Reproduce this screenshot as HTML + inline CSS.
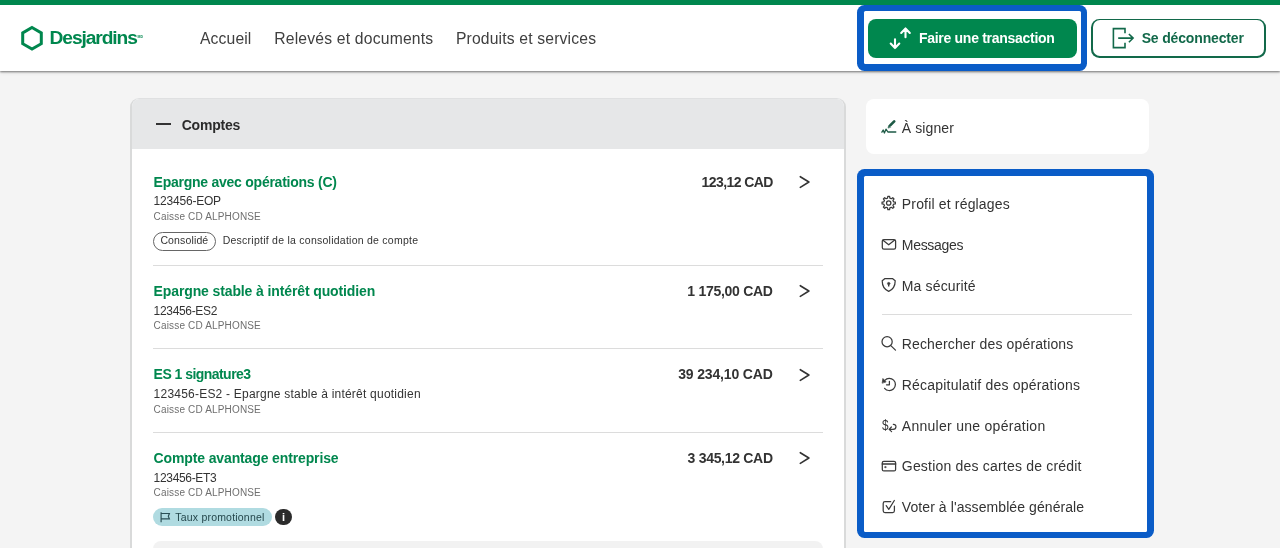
<!DOCTYPE html>
<html lang="fr"><head><meta charset="utf-8"><title>Desjardins</title>
<style>
html,body{margin:0;padding:0;}
body{width:1280px;height:548px;overflow:hidden;background:#f4f4f4;font-family:"Liberation Sans",sans-serif;position:relative;}
.t{position:absolute;white-space:nowrap;line-height:1;}
.abs{position:absolute;}
svg{position:absolute;overflow:visible;}
#w{position:absolute;left:0;top:0;width:1280px;height:548px;will-change:transform;}
</style></head><body><div id="w">

<div class="abs" style="left:0;top:0;width:1280px;height:70.5px;background:#fff;box-shadow:0 1px 2px rgba(0,0,0,.5),0 2px 4px rgba(0,0,0,.07);"></div>
<div class="abs" style="left:0;top:0;width:1280px;height:5px;background:#00874e;"></div>
<svg style="left:19px;top:24px" width="26" height="28" viewBox="19 24 26 28"><polygon points="32,27.5 41.3,32.9 41.3,43.7 32,49.1 22.7,43.7 22.7,32.9" fill="none" stroke="#00874e" stroke-width="3" stroke-linejoin="miter"/></svg>
<span class="t" style="top:28.35px;font-size:19.2px;color:#00874e;left:49.60px;letter-spacing:-1.100px;font-weight:bold;">Desjardins</span>
<span class="t" style="top:35.54px;font-size:3.5px;color:#00874e;left:137.50px;font-weight:bold;">MD</span>
<span class="t" style="top:31.01px;font-size:15.7px;color:#404040;left:200.00px;letter-spacing:0.130px;">Accueil</span>
<span class="t" style="top:31.01px;font-size:15.7px;color:#404040;left:274.20px;letter-spacing:0.200px;">Relevés et documents</span>
<span class="t" style="top:31.01px;font-size:15.7px;color:#404040;left:455.90px;letter-spacing:0.170px;">Produits et services</span>
<div class="abs" style="left:857.3px;top:5px;width:230.1px;height:65.5px;border-radius:7.5px;background:#0a5cc7;"></div>
<div class="abs" style="left:863.9px;top:11.4px;width:217.3px;height:52.9px;border-radius:1.5px;background:#fff;"></div>
<div class="abs" style="left:868.2px;top:18.6px;width:209px;height:39.3px;border-radius:8px;background:#00874e;"></div>
<svg style="left:885px;top:25px" width="28" height="28" viewBox="885 25 28 28" fill="none" stroke="#fff" stroke-width="2.1" stroke-linecap="round" stroke-linejoin="round"><path d="M895 39.2V48M890.7 43.6l4.3 4.5 4.3-4.5"/><path d="M905.5 37.3V28.6M901.2 33l4.3-4.5 4.3 4.5"/></svg>
<span class="t" style="top:31.25px;font-size:14px;color:#fff;left:919.00px;letter-spacing:-0.290px;font-weight:bold;">Faire une transaction</span>
<div class="abs" style="left:1091.2px;top:18.5px;width:174.8px;height:39.1px;border-radius:8.5px;background:#12694a;"></div>
<div class="abs" style="left:1092.8px;top:20.1px;width:171.6px;height:35.9px;border-radius:7px;background:#fff;"></div>
<svg style="left:1110px;top:26px" width="26" height="24" viewBox="1110 26 26 24" fill="none" stroke="#12694a" stroke-width="1.6" stroke-linecap="butt" stroke-linejoin="miter"><path d="M1125 33.200V28.600H1113.400V47.600H1125V42.800"/><path d="M1118.200 38.100H1133M1128.900 34l4.200 4.100-4.200 4.100"/></svg>
<span class="t" style="top:30.65px;font-size:14px;color:#12694a;left:1141.70px;letter-spacing:-0.160px;font-weight:bold;">Se déconnecter</span>
<div class="abs" style="left:130px;top:98px;width:716px;height:470px;border:2px solid #d9dada;border-top:1px solid #dfe0e1;border-radius:9px;background:#fff;overflow:hidden;box-sizing:border-box"><div style="height:50px;background:#e6e7e8"></div></div>
<div class="abs" style="left:155.6px;top:123.2px;width:15.8px;height:1.6px;background:#333"></div>
<span class="t" style="top:117.65px;font-size:14px;color:#2b2b2b;left:181.70px;letter-spacing:-0.200px;font-weight:bold;">Comptes</span>
<span class="t" style="top:174.65px;font-size:14px;color:#00874e;left:153.60px;letter-spacing:-0.250px;font-weight:bold;">Epargne avec opérations (C)</span>
<span class="t" style="top:195.34px;font-size:12px;color:#333;left:153.60px;letter-spacing:-0.210px;">123456-EOP</span>
<span class="t" style="top:212.03px;font-size:10px;color:#6f6f6f;left:153.60px;letter-spacing:0.160px;">Caisse CD ALPHONSE</span>
<span class="t" style="top:174.65px;font-size:14px;color:#333;right:507.30px;letter-spacing:-0.590px;font-weight:bold;">123,12 CAD</span>
<svg style="left:798px;top:174.0px" width="14" height="16" viewBox="0 0 14 16" fill="none" stroke="#333" stroke-width="1.6" stroke-linecap="round" stroke-linejoin="round"><path d="M2.300 2.700L10.900 8.050L2.300 13.400"/></svg>
<span class="t" style="top:283.95px;font-size:14px;color:#00874e;left:153.60px;letter-spacing:-0.120px;font-weight:bold;">Epargne stable à intérêt quotidien</span>
<span class="t" style="top:304.64px;font-size:12px;color:#333;left:153.60px;letter-spacing:-0.330px;">123456-ES2</span>
<span class="t" style="top:321.34px;font-size:10px;color:#6f6f6f;left:153.60px;letter-spacing:0.160px;">Caisse CD ALPHONSE</span>
<span class="t" style="top:283.95px;font-size:14px;color:#333;right:507.30px;letter-spacing:-0.280px;font-weight:bold;">1 175,00 CAD</span>
<svg style="left:798px;top:283.3px" width="14" height="16" viewBox="0 0 14 16" fill="none" stroke="#333" stroke-width="1.6" stroke-linecap="round" stroke-linejoin="round"><path d="M2.300 2.700L10.900 8.050L2.300 13.400"/></svg>
<span class="t" style="top:367.15px;font-size:14px;color:#00874e;left:153.60px;letter-spacing:-0.540px;font-weight:bold;">ES 1 signature3</span>
<span class="t" style="top:387.84px;font-size:12px;color:#333;left:153.60px;letter-spacing:0.220px;">123456-ES2 - Epargne stable à intérêt quotidien</span>
<span class="t" style="top:404.54px;font-size:10px;color:#6f6f6f;left:153.60px;letter-spacing:0.160px;">Caisse CD ALPHONSE</span>
<span class="t" style="top:367.15px;font-size:14px;color:#333;right:507.30px;letter-spacing:-0.150px;font-weight:bold;">39 234,10 CAD</span>
<svg style="left:798px;top:366.5px" width="14" height="16" viewBox="0 0 14 16" fill="none" stroke="#333" stroke-width="1.6" stroke-linecap="round" stroke-linejoin="round"><path d="M2.300 2.700L10.900 8.050L2.300 13.400"/></svg>
<span class="t" style="top:450.85px;font-size:14px;color:#00874e;left:153.60px;letter-spacing:-0.130px;font-weight:bold;">Compte avantage entreprise</span>
<span class="t" style="top:471.54px;font-size:12px;color:#333;left:153.60px;letter-spacing:-0.330px;">123456-ET3</span>
<span class="t" style="top:488.24px;font-size:10px;color:#6f6f6f;left:153.60px;letter-spacing:0.160px;">Caisse CD ALPHONSE</span>
<span class="t" style="top:450.85px;font-size:14px;color:#333;right:507.30px;letter-spacing:-0.300px;font-weight:bold;">3 345,12 CAD</span>
<svg style="left:798px;top:450.2px" width="14" height="16" viewBox="0 0 14 16" fill="none" stroke="#333" stroke-width="1.6" stroke-linecap="round" stroke-linejoin="round"><path d="M2.300 2.700L10.900 8.050L2.300 13.400"/></svg>
<div class="abs" style="left:153px;top:264.5px;width:670px;height:1px;background:#dcdcdc"></div>
<div class="abs" style="left:153px;top:348px;width:670px;height:1px;background:#dcdcdc"></div>
<div class="abs" style="left:153px;top:432px;width:670px;height:1px;background:#dcdcdc"></div>
<div class="abs" style="left:153px;top:232px;width:61px;height:16.8px;border:1px solid #666;border-radius:10px;"></div>
<span class="t" style="top:235.41px;font-size:10.5px;color:#333;left:160.40px;letter-spacing:0.140px;">Consolidé</span>
<span class="t" style="top:234.51px;font-size:10.5px;color:#333;left:222.70px;letter-spacing:0.250px;">Descriptif de la consolidation de compte</span>
<div class="abs" style="left:153px;top:508.2px;width:119px;height:18.2px;border-radius:10px;background:#b0dbe1"></div>
<svg style="left:159px;top:510px" width="12" height="14" viewBox="159 510 12 14" fill="none" stroke="#2a4f55" stroke-width="1.15"><path d="M161.1 512.3V522.300M161.100 513.500H169.400L168.300 516.200L169.400 518.900H161.100"/></svg>
<span class="t" style="top:511.81px;font-size:10.5px;color:#25474c;left:175.30px;letter-spacing:0.200px;">Taux promotionnel</span>
<div class="abs" style="left:275.4px;top:508.7px;width:16.4px;height:16.4px;border-radius:50%;background:#2b2b2b"></div>
<span class="t" style="top:511.99px;font-size:11px;color:#fff;left:282.10px;font-weight:bold;">i</span>
<div class="abs" style="left:153px;top:541px;width:670px;height:30px;border-radius:8px;background:#f2f2f2"></div>
<div class="abs" style="left:865.8px;top:99.4px;width:283px;height:55px;border-radius:8px;background:#fff"></div>
<span class="t" style="top:120.55px;font-size:14px;color:#333;left:901.80px;letter-spacing:0.110px;">À signer</span>
<div class="abs" style="left:857.3px;top:168.9px;width:296.5px;height:368.8px;border-radius:7.5px;background:#0a5cc7;"></div>
<div class="abs" style="left:863.9px;top:176.1px;width:283.1px;height:355.7px;border-radius:1.5px;background:#fff;"></div>
<span class="t" style="top:196.85px;font-size:14px;color:#333;left:901.80px;letter-spacing:0.170px;">Profil et réglages</span>
<span class="t" style="top:237.75px;font-size:14px;color:#333;left:901.80px;letter-spacing:-0.310px;">Messages</span>
<span class="t" style="top:278.55px;font-size:14px;color:#333;left:901.80px;letter-spacing:0.150px;">Ma sécurité</span>
<span class="t" style="top:337.35px;font-size:14px;color:#333;left:901.80px;letter-spacing:0.140px;">Rechercher des opérations</span>
<span class="t" style="top:378.15px;font-size:14px;color:#333;left:901.80px;letter-spacing:0.200px;">Récapitulatif des opérations</span>
<span class="t" style="top:418.75px;font-size:14px;color:#333;left:901.80px;letter-spacing:0.280px;">Annuler une opération</span>
<span class="t" style="top:459.35px;font-size:14px;color:#333;left:901.80px;letter-spacing:0.200px;">Gestion des cartes de crédit</span>
<span class="t" style="top:500.35px;font-size:14px;color:#333;left:901.80px;letter-spacing:0.080px;">Voter à l'assemblée générale</span>
<div class="abs" style="left:882px;top:313.5px;width:250px;height:1px;background:#dcdcdc"></div>
<svg style="left:0;top:0" width="1280" height="548" viewBox="0 0 1280 548" fill="none" stroke="#3a3a3a" stroke-width="1.25" stroke-linecap="round" stroke-linejoin="round"><g stroke="#1d5a45"><path d="M890.200 125.400L894.200 121.400" stroke-width="2.700"/><path d="M888.100 127.700l0.600-2.200 1.600 1.600z" fill="#1d5a45" stroke-width="0.600"/><path d="M881.9 132.2l1.3-2.2 1.2 3 1.6-3.8 1.9 2.8H895.8" stroke-width="1.3"/></g><path d="M887.53 198.14 L887.81 196.36 L889.59 196.36 L889.87 198.14 L891.31 198.74 L892.76 197.67 L894.03 198.94 L892.96 200.39 L893.56 201.83 L895.34 202.11 L895.34 203.89 L893.56 204.17 L892.96 205.61 L894.03 207.06 L892.76 208.33 L891.31 207.26 L889.87 207.86 L889.59 209.64 L887.81 209.64 L887.53 207.86 L886.09 207.26 L884.64 208.33 L883.37 207.06 L884.44 205.61 L883.84 204.17 L882.06 203.89 L882.06 202.11 L883.84 201.83 L884.44 200.39 L883.37 198.94 L884.64 197.67 L886.09 198.74Z"/><circle cx="888.7" cy="203" r="2.2"/><rect x="882.3" y="239.5" width="13.3" height="9.6" rx="1.6"/><path d="M883 240.3l5.7 4.5 5.7-4.5"/><path d="M885 278.600H892.400L895.200 280.800C895.200 286.500 892.500 289.800 888.700 291.400C884.900 289.800 882.200 286.500 882.200 280.800Z"/><circle cx="888.700" cy="283.600" r="1.300" fill="#3a3a3a" stroke-width="0.400"/><path d="M888.700 284.500v2" stroke-width="1.400" stroke-linecap="butt"/><circle cx="887.100" cy="341.700" r="5.100"/><path d="M890.800 345.600l4.700 4.500"/><path d="M884.800 380.300A6.100 6.100 0 1 1 884.600 388.300"/><path d="M882.200 382.800l0.700-4.300 3 3.200z" fill="#3a3a3a" stroke-width="0.7"/><path d="M889.400 381.400v3.400h-2.900"/><path d="M893.300 424.300c3.500-0.200 3.700 4.900-0.300 5.100h-3.600M891.400 427l-2.300 2.400 2.500 2.200" stroke-width="1.2"/><rect x="882.300" y="461.300" width="13.300" height="9.600" rx="1.500"/><path d="M882.300 464h13.300" stroke-width="1.500"/><circle cx="885.300" cy="467.100" r="0.700" fill="#3a3a3a" stroke-width="0.600"/><path d="M890.700 501.700h-5.700a1.800 1.800 0 0 0-1.800 1.800v7.200a1.800 1.800 0 0 0 1.800 1.800h7.600a1.800 1.800 0 0 0 1.800-1.800v-4.500"/><path d="M886.200 505.700l2.600 3.600 5.500-8.800"/></svg>
<span class="t" style="top:417.65px;font-size:14px;color:#333;left:881.70px;transform:scaleX(0.84);transform-origin:0 0;">$</span>
</div></body></html>
